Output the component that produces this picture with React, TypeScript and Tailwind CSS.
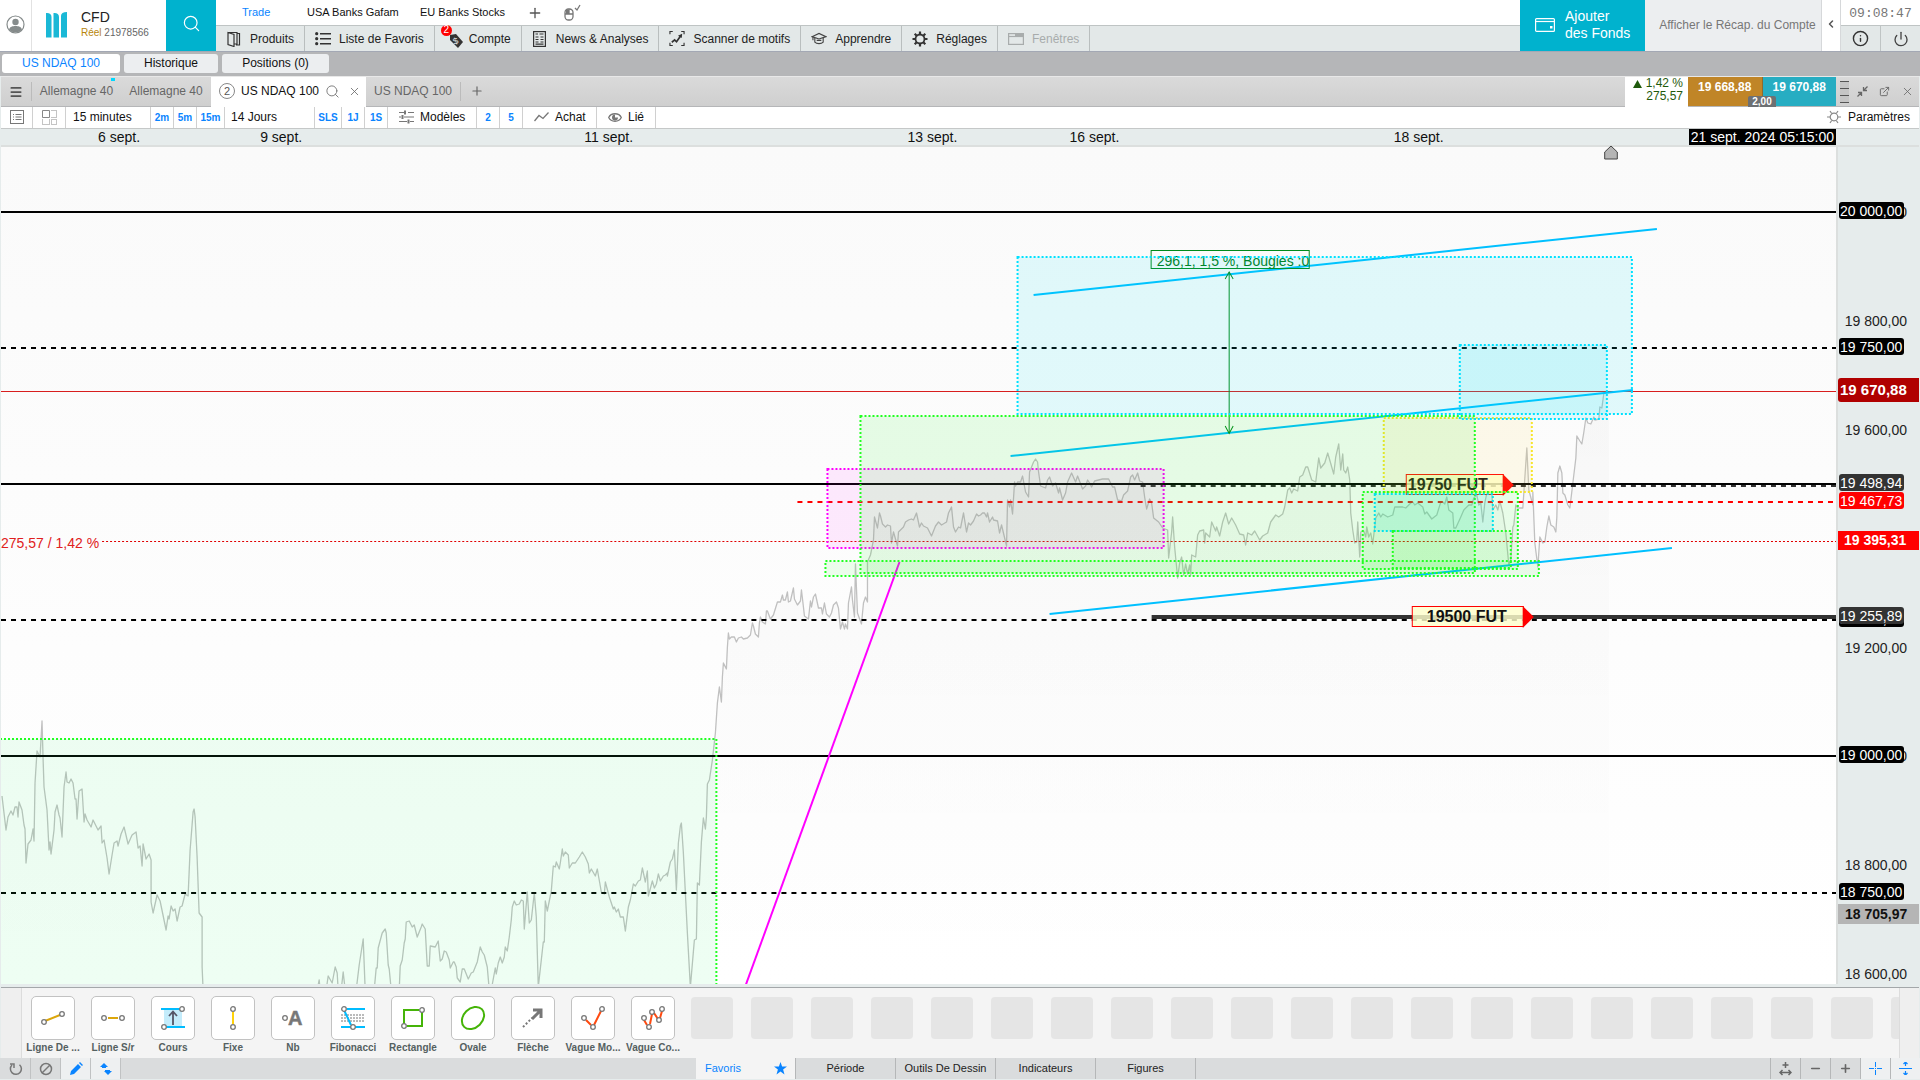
import type { ReactNode } from 'react';
import { Search, X, Plus, Minus, Menu, ExternalLink, ChevronLeft, Power, Info } from 'lucide-react';

// Plot area in screen units, shared by the svg and by the labels around it
const PLOT = { x: 1, y: 147, w: 1834, h: 837 };

const topAt = (y: number) => ({ top: `${((y - PLOT.y) / PLOT.h) * 100}%` });
const leftAt = (x: number) => ({ left: `${((x - PLOT.x) / PLOT.w) * 100}%` });

const PRICES =
  '2,796 6,830 8,817 11,811 13,815 15,807 17,807 18,817 19,802 22,810 24,825 25,829 26,863 28,844 31,840 33,829 34,841 35,783 37,751 40,757 42,721 43,757 44,787 47,810 49,850 50,842 51,854 54,830 55,812 57,805 59,815 60,818 62,837 64,787 66,772 67,782 69,783 71,779 73,783 75,799 76,799 77,819 79,791 82,789 84,822 85,814 87,820 91,827 93,820 98,830 101,826 102,843 104,840 107,858 109,874 112,855 114,843 117,841 118,846 121,834 124,827 128,844 132,835 136,832 138,848 140,846 142,866 143,844 146,859 149,854 151,860 151,902 153,913 157,895 160,901 166,930 168,916 169,919 171,906 173,911 175,909 177,921 180,907 182,906 185,894 188,896 190,850 193,812 194,809 195,817 197,857 199,913 202,917 202,967 203,990 ' +
  '317,990 319,980 320,990 326,990 328,976 332,983 335,967 337,973 338,990 341,990 343,972 345,990 356,990 359,965 363,939 365,990 374,990 376,968 377,968 378,948 382,933 385,929 386,933 388,965 389,969 391,990 399,990 400,966 402,960 404,943 405,939 406,922 409,921 412,927 414,925 417,937 421,927 422,924 425,929 427,966 429,966 430,946 435,947 438,941 440,961 442,959 444,951 446,952 449,960 450,968 453,962 454,962 456,967 457,978 460,982 462,969 464,969 468,979 471,973 473,972 477,962 480,947 482,952 484,955 487,967 489,990 491,990 495,968 496,974 498,963 500,957 502,963 504,957 505,947 507,951 509,937 511,920 512,907 514,901 516,905 519,904 521,900 523,901 524,929 527,892 529,923 531,920 534,893 536,917 538,987 543,942 544,942 545,901 547,911 551,891 553,866 555,867 556,862 559,869 560,863 562,849 563,856 565,852 568,855 569,868 572,863 575,863 579,857 582,852 585,857 588,864 589,873 591,869 595,876 597,869 598,875 601,892 604,894 605,882 609,897 613,909 614,907 616,912 618,909 620,917 623,917 625,931 628,907 630,900 633,884 635,886 638,881 640,880 642,868 645,882 647,871 648,896 652,881 654,888 656,884 658,874 660,881 663,876 665,875 667,873 667,876 670,862 672,859 674,850 676,890 678,843 680,826 681,823 683,853 687,933 690,987 694,940 696,939 697,883 699,885 701,842 703,818 705,829 706,817 707,784 709,780 712,760 715,733 ' +
  '717,703 719,687 721,702 722,677 723,663 726,669 727,647 728,633 729,639 731,637 734,637 736,642 738,638 741,637 743,639 747,638 750,635 752,623 753,626 755,634 758,637 759,623 760,617 762,622 765,624 766,611 767,611 770,619 773,615 777,602 780,602 782,595 783,600 785,600 787,592 788,602 790,601 793,588 794,599 797,605 800,601 801,590 803,607 804,616 808,619 810,601 811,607 813,597 815,594 818,608 821,608 822,614 824,603 826,614 829,617 831,613 833,605 836,602 838,608 840,629 842,622 844,629 845,624 847,629 848,603 851,587 852,600 854,617 855,564 857,613 861,624 863,603 865,597 867,602 867,562 870,555 873,540 874,517 877,528 879,513 880,516 882,524 885,527 887,525 890,526 891,543 893,532 897,546 898,532 903,527 905,522 908,520 911,519 913,520 916,513 919,527 921,523 923,526 927,528 931,536 935,526 938,522 941,525 946,522 948,513 951,507 953,527 955,532 958,527 960,528 963,513 966,532 968,523 970,525 973,521 976,514 978,516 980,515 982,513 984,513 986,517 987,513 989,522 992,517 993,520 997,521 999,533 1001,525 1006,546 1007,500 1009,507 1010,500 1012,514 1014,482 1015,486 1017,482 1020,482 1022,476 1025,492 1028,497 1029,472 1033,462 1035,459 1037,462 1038,472 1040,486 1045,488 1047,480 1049,477 1052,486 1055,483 1058,493 1059,488 1062,500 1065,493 1067,482 1071,473 1075,482 1077,476 1082,489 1085,486 1087,480 1089,483 1091,487 1094,481 1102,479 1108,479 1112,487 1114,487 1117,500 1121,501 1123,495 1127,491 1130,477 1132,475 1134,480 1137,473 1139,481 1142,482 1144,497 1146,509 1149,499 1151,503 1153,518 1158,522 1162,528 1167,530 1168,558 1171,532 1172,517 1174,547 1177,578 1179,563 1181,557 1183,575 1185,564 1187,574 1189,565 1190,575 1191,555 1195,557 1197,535 1199,531 ' +
  '1203,530 1204,543 1205,533 1209,537 1211,522 1215,531 1216,527 1219,536 1222,522 1225,513 1228,524 1231,518 1235,525 1239,534 1243,535 1245,545 1247,533 1251,535 1254,531 1259,540 1262,536 1267,533 1270,522 1275,515 1278,517 1282,514 1284,507 1287,490 1289,488 1291,493 1293,489 1297,491 1299,477 1302,475 1305,467 1307,467 1311,480 1315,482 1318,458 1320,468 1324,463 1327,453 1333,474 1335,457 1338,444 1340,470 1342,454 1343,470 1345,473 1347,467 1349,480 1350,513 1352,530 1354,543 1356,542 1357,522 1359,557 1360,532 1363,531 1365,537 1366,527 1368,537 1370,533 1372,544 1375,518 1378,513 1380,517 1382,514 1387,517 1392,515 1394,507 1402,507 1405,508 1410,503 1412,502 1414,505 1417,503 1422,507 1424,514 1426,512 1431,519 1436,515 1440,502 1442,502 1444,504 1446,497 1448,510 1452,513 1453,528 1455,528 1460,517 1463,510 1468,505 1471,505 1473,498 1476,495 1478,505 1480,503 1482,522 1484,503 1486,493 1491,493 1492,510 1495,505 1497,510 1499,501 1502,513 1505,533 1508,565 1510,560 1512,527 1513,525 1515,505 1517,508 1522,508 1523,493 1526,448 1528,490 1532,505 1532,492 1534,543 1537,567 1539,537 1542,543 1544,542 1546,527 1548,516 1550,525 1553,527 1555,532 1556,517 1557,473 1559,466 1561,473 1562,493 1564,495 1567,505 1569,508 1572,483 1575,458 1576,436 1579,441 1581,444 1583,432 1585,418 1587,423 1590,424 1593,417 1594,420 1598,419 1599,407 1601,408 1603,393 1608,392';

const LEVELS = [
  { x: 1, y: 212, width: 2, color: '#000' },
  { x: 1, y: 348, width: 2, color: '#000', dash: '5 5' },
  { x: 1, y: 391.5, width: 1, color: '#d81e1e' },
  { x: 1140, y: 486, width: 2, color: '#333', dash: '5 5' },
  { x: 1, y: 484, width: 2, color: '#000' },
  { x: 797, y: 502, width: 2, color: '#f00', dash: '5 5' },
  { x: 102, y: 541.5, width: 1, color: '#e00000', dash: '2 2' },
  { x: 1, y: 620, width: 2, color: '#000', dash: '5 5' },
  { x: 1151, y: 617, width: 4, color: '#333' },
  { x: 1, y: 756, width: 2, color: '#000' },
  { x: 1, y: 893, width: 2, color: '#000', dash: '5 5' },
];

const ZONES = [
  { x1: -4, y1: 739, x2: 716, y2: 995, color: '#22ff22', fill: '#22f560', alpha: 0.08 },
  { x1: 827, y1: 469, x2: 1163, y2: 548, color: '#ff00ff', alpha: 0.08 },
  { x1: 1383, y1: 418, x2: 1531, y2: 492, color: '#f7e52c', fill: '#ffdc50', alpha: 0.11 },
  { x1: 860, y1: 416, x2: 1474, y2: 573, color: '#22ff22', fill: '#22f522', alpha: 0.1 },
  { x1: 825, y1: 561, x2: 1538, y2: 576, color: '#22ff22', alpha: 0.08 },
  { x1: 1017, y1: 257, x2: 1631, y2: 414, color: '#00e1ff', fill: '#00e4fa', alpha: 0.105 },
  { x1: 1459, y1: 345, x2: 1606, y2: 419, color: '#00e1ff', fill: '#00e4fa', alpha: 0.105 },
  { x1: 1374, y1: 494, x2: 1492, y2: 531, color: '#00e1ff', fill: '#00e4fa', alpha: 0.12 },
  { x1: 1362, y1: 492, x2: 1517, y2: 569, color: '#22ff22', alpha: 0.09 },
  { x1: 1392, y1: 531, x2: 1510, y2: 568, color: '#22ff22', alpha: 0.09 },
];

const TRENDS = [
  { x1: 1033, y1: 295, x2: 1656, y2: 229 },
  { x1: 1010, y1: 456, x2: 1632, y2: 390 },
  { x1: 1049, y1: 614, x2: 1671, y2: 548 },
];

const DATES = [
  { x: 98, label: '6 sept.' },
  { x: 260, label: '9 sept.' },
  { x: 584, label: '11 sept.' },
  { x: 907, label: '13 sept.' },
  { x: 1069, label: '16 sept.' },
  { x: 1393, label: '18 sept.' },
];

const AXIS = [
  { y: 212, label: '20 000,00' },
  { y: 321, label: '19 800,00' },
  { y: 430, label: '19 600,00' },
  { y: 648, label: '19 200,00' },
  { y: 756, label: '19 000,00' },
  { y: 865, label: '18 800,00' },
  { y: 974, label: '18 600,00' },
];

const TAGS = [
  { y: 202, label: '20 000,00', tone: 'bg-black' },
  { y: 338, label: '19 750,00', tone: 'bg-black' },
  { y: 474, label: '19 498,94', tone: 'bg-[#333]' },
  { y: 492, label: '19 467,73', tone: 'bg-[#f00]' },
  { y: 610, label: '19 250,00', tone: 'bg-black' },
  { y: 607, label: '19 255,89', tone: 'bg-[#333]' },
  { y: 746, label: '19 000,00', tone: 'bg-black' },
  { y: 883, label: '18 750,00', tone: 'bg-black' },
];

/* ---------- Icons ---------- */

function UserIcon() {
  return (
    <svg width="19" height="19" viewBox="0 0 19 19" fill="none">
      <circle cx="9.5" cy="9.5" r="8.5" stroke="#858b8b" strokeWidth="1.2" />
      <circle cx="9.5" cy="7" r="3.2" fill="#858b8b" />
      <path d="M3 14.5c1-3 3.500-3.500 6.500-3.500s5.500.5 6.500 3.500c-1.600 2-4 3-6.500 3s-4.900-1-6.500-3z" fill="#858b8b" />
    </svg>
  );
}

function Logo() {
  return (
    <svg width="21" height="26" viewBox="0 0 21 26" fill="#1ab8d6">
      <path d="M0 1c3-.5 5.500 1 5.500 4v20.500H0z" />
      <path d="M7.500 1c3-.5 5.500 1 5.500 4v20.500H7.500z" />
      <path d="M15 4c0-2.500 2-4 6-4v25.500h-6z" />
    </svg>
  );
}

function MouseIcon() {
  return (
    <svg width="18" height="18" viewBox="0 0 18 18" fill="none" stroke="#777" strokeWidth="1.3">
      <rect x="2" y="5" width="8" height="11" rx="3.500" />
      <path d="M2 10h8M6 5v5" />
      <path d="M3 6h3v4H3z" fill="#777" stroke="none" />
      <path d="M12 4l2 2 3-5" />
    </svg>
  );
}

function BookIcon() {
  return (
    <svg width="14" height="16" viewBox="0 0 14 16" fill="none" stroke="#333" strokeWidth="1.2">
      <path d="M1 1.500l6 2v12l-6-2z" />
      <path d="M1 1.500h9v11.500H7M10 2.500h2.500v11.500H9" />
    </svg>
  );
}

function ListIcon() {
  return (
    <svg width="16" height="14" viewBox="0 0 16 14" fill="#333">
      <path d="M5 1h11v1.500H5zM5 6h11v1.500H5zM5 11h11v1.500H5z" />
      <circle cx="1.700" cy="1.700" r="1.600" />
      <circle cx="1.700" cy="6.700" r="1.600" />
      <circle cx="1.700" cy="11.700" r="1.600" />
    </svg>
  );
}

function AccountIcon() {
  return (
    <span className="relative block h-5 w-4">
      <svg width="20" height="20" viewBox="0 0 20 20" fill="#333">
        <path d="M5 6l6-1 7 8-5 6-8-8z" />
        <text x="8" y="15" fontSize="9" fill="#e3e8e8" transform="rotate(-20 11 12)">$</text>
      </svg>
      <span className="absolute -top-1 -left-1 flex size-[11px] items-center justify-center rounded-full bg-[#f00] text-[10px] text-white">2</span>
    </span>
  );
}

function NewsIcon() {
  return (
    <svg width="13" height="16" viewBox="0 0 13 16" fill="none" stroke="#333" strokeWidth="1.200">
      <rect x=".6" y=".6" width="11.800" height="14.800" />
      <path d="M2.500 3h2.500M6.500 3h4M2.500 6h3M2.500 8.500h3M2.500 11h3M7.500 6h3M7.500 8.500h3M7.500 11h3M2.500 13.200h8" />
    </svg>
  );
}

function ScannerIcon() {
  return (
    <svg width="16" height="17" viewBox="0 0 17 17" fill="none" stroke="#333" strokeWidth="1.200">
      <path d="M1 4V1h3M13 1h3v3M1 13v3h3M13 16h3v-3" />
      <path d="M3 12.500l3-2.500 2 2 4.500-6.500" strokeWidth="1.800" />
      <path d="M9.500 5.500L14 3.500l-.5 4.500z" fill="#333" stroke="none" />
    </svg>
  );
}

function LearnIcon() {
  return (
    <svg width="16" height="13" viewBox="0 0 17 14" fill="none" stroke="#444" strokeWidth="1.200">
      <path d="M1 5l7.500-3.500L16 5l-7.500 2.500z" />
      <path d="M4 6.500v4.500c2 2 7 2 9 0V6.500M6 9h5M2 5.500V9" />
    </svg>
  );
}

function GearIcon() {
  return (
    <svg width="16" height="16" viewBox="0 0 16 16" fill="none" stroke="#333">
      <circle cx="8" cy="8" r="4.500" strokeWidth="1.800" />
      <path d="M8 .5v3M8 12.500v3M.5 8h3M12.500 8h3M2.700 2.700l2 2M11.300 11.300l2 2M2.700 13.300l2-2M11.300 4.700l2-2" strokeWidth="2.200" />
    </svg>
  );
}

function WindowIcon() {
  return (
    <svg width="16" height="12" viewBox="0 0 16 12" fill="none" stroke="#a8acac" strokeWidth="1.200">
      <rect x=".6" y=".6" width="14.800" height="10.800" />
      <path d="M1 3.500h14" />
      <path d="M7 1h8v2.500H7z" fill="#a8acac" stroke="none" />
    </svg>
  );
}

function WalletIcon() {
  return (
    <svg width="20" height="14" viewBox="0 0 20 14" fill="none" stroke="#fff" strokeWidth="1.200">
      <rect x=".6" y=".6" width="18.800" height="12.800" rx="1" />
      <path d="M1 3.500h18" />
      <path d="M15 8h2.500v2.500H15z" fill="#fff" stroke="none" />
    </svg>
  );
}

function OutlineListIcon() {
  return (
    <svg width="14" height="14" viewBox="0 0 14 14" fill="none" stroke="#777">
      <rect x=".5" y=".5" width="13" height="13" />
      <path d="M3 4.500h1M3 7h1M3 9.500h1M5.500 4.500h6M5.500 7h6M5.500 9.500h6" />
    </svg>
  );
}

function GridIcon() {
  return (
    <svg width="15" height="15" viewBox="0 0 15 15" fill="none" stroke="#888">
      <path d="M.5.5h7v7h-7z" />
      <path d="M9.500.5h5v7h-5M.5 9.500v5h7v-5M9.500 9.500h5v5h-5z" strokeDasharray="1 1" />
    </svg>
  );
}

function SlidersIcon() {
  return (
    <svg width="15" height="14" viewBox="0 0 15 14" fill="none" stroke="#777" strokeWidth="1.200">
      <path d="M0 2.500h6M9 2.500h6M0 7h2M5 7h10M0 11.500h8M11 11.500h4" />
      <path d="M6 .5v4M3.500 5v4M9.500 9.500v4" strokeWidth="2" />
    </svg>
  );
}

function LineIcon() {
  return (
    <svg width="15" height="10" viewBox="0 0 15 10" fill="none" stroke="#777" strokeWidth="1.300">
      <path d="M.5 9L5 3.500 9 6.500 14.500.5" />
    </svg>
  );
}

function EyeIcon() {
  return (
    <svg width="14" height="11" viewBox="0 0 14 11" fill="none" stroke="#777">
      <path d="M.7 5.500C3 .5 11 .5 13.300 5.500 11 10.500 3 10.500.7 5.500z" strokeWidth="1.300" />
      <path d="M7 2.500a3 3 0 1 0 3 3H7z" fill="#777" stroke="none" />
    </svg>
  );
}

function SunIcon() {
  return (
    <svg width="14" height="14" viewBox="0 0 14 14" fill="none" stroke="#888" strokeWidth="1.200">
      <circle cx="7" cy="7" r="3.800" />
      <path d="M0 7h3M11 7h3M3 1l1.700 2.500M11 1L9.300 3.500M3 13l1.700-2.500M11 13l-1.700-2.500" />
    </svg>
  );
}

function CollapseIcon() {
  return (
    <svg width="11" height="11" viewBox="0 0 11 11" fill="none" stroke="#666" strokeWidth="1.300">
      <path d="M10.500.5L7 4M6.500 1v3.500H10M.5 10.500L4 7M1 6.500h3.500V10" />
    </svg>
  );
}

/* ---------- Drawing tools ---------- */

const node = { r: 2.3, fill: '#fff', stroke: '#777', strokeWidth: 1.3 };

const TOOLS: { label: string; icon: ReactNode }[] = [
  {
    label: 'Ligne De ...',
    icon: (
      <>
        <path d="M6 18L21 12" stroke="#dca60a" strokeWidth="2" />
        <circle cx="5" cy="19" {...node} />
        <circle cx="23" cy="11" {...node} />
      </>
    ),
  },
  {
    label: 'Ligne S/r',
    icon: (
      <>
        <path d="M9 15h10" stroke="#dca60a" strokeWidth="2" />
        <circle cx="5" cy="15" {...node} />
        <circle cx="23" cy="15" {...node} />
      </>
    ),
  },
  {
    label: 'Cours',
    icon: (
      <>
        <path d="M5 7h18v16H5z" fill="#c4ecfb" />
        <path d="M2 6h20M5 24h21" stroke="#00bcff" strokeWidth="2" />
        <path d="M14 22V9M10 13l4-4.500 4 4.500" stroke="#556" strokeWidth="1.800" />
        <circle cx="23" cy="6" {...node} />
        <circle cx="5" cy="24" {...node} />
      </>
    ),
  },
  {
    label: 'Fixe',
    icon: (
      <>
        <path d="M14 9v12" stroke="#ffd20a" strokeWidth="2" />
        <circle cx="14" cy="6" {...node} />
        <circle cx="14" cy="24" {...node} />
      </>
    ),
  },
  {
    label: 'Nb',
    icon: (
      <>
        <circle cx="6" cy="15" {...node} />
        <text x="9" y="22" fontSize="20" fill="#777" stroke="#777" strokeWidth=".5" fontFamily="Liberation Sans, sans-serif">A</text>
      </>
    ),
  },
  {
    label: 'Fibonacci',
    icon: (
      <>
        <path d="M8 6h18M2 24h24" stroke="#00bcff" strokeWidth="2" />
        <path d="M2 12h24M2 15h24M2 18h24" stroke="#777" strokeDasharray="2 1" />
        <path d="M5 7l7 15" stroke="#00bcff" strokeWidth="2" />
        <circle cx="5" cy="6" {...node} />
        <circle cx="14" cy="24" {...node} />
      </>
    ),
  },
  {
    label: 'Rectangle',
    icon: (
      <>
        <path d="M5 21V7h15M23 9v14H8" stroke="#45b408" strokeWidth="2" />
        <circle cx="23" cy="7" {...node} />
        <circle cx="5" cy="23" {...node} />
      </>
    ),
  },
  {
    label: 'Ovale',
    icon: <ellipse cx="14" cy="15" rx="12.500" ry="9.500" transform="rotate(-45 14 15)" stroke="#45b408" strokeWidth="2" />,
  },
  {
    label: 'Flèche',
    icon: (
      <>
        <path d="M4 24l9-9" stroke="#777" strokeWidth="2" strokeDasharray="2 2" />
        <path d="M13 16l9-9M14 7h8v8" stroke="#777" strokeWidth="3" />
      </>
    ),
  },
  {
    label: 'Vague Mo...',
    icon: (
      <>
        <path d="M7 17l5 5M15 22l7-14" stroke="#ff4a10" strokeWidth="2" />
        <circle cx="5" cy="15" {...node} />
        <circle cx="14" cy="24" {...node} />
        <circle cx="23" cy="6" {...node} />
      </>
    ),
  },
  {
    label: 'Vague Co...',
    icon: (
      <>
        <path d="M5 17l3 5M11 21l2-10M15 10l4 6M21 15l2-7" stroke="#ff4a10" strokeWidth="2" />
        <circle cx="5" cy="15" {...node} />
        <circle cx="10" cy="24" {...node} />
        <circle cx="13" cy="9" {...node} />
        <circle cx="20" cy="17" {...node} />
        <circle cx="23" cy="6" {...node} />
      </>
    ),
  },
];

/* ---------- Header ---------- */

function NavItem({ icon, label, disabled }: { icon: ReactNode; label: string; disabled?: boolean }) {
  return (
    <button
      disabled={disabled}
      className="flex items-center gap-2 border-r border-[#b9bebe] px-2.5 text-xs text-[#222] disabled:text-[#a8acac]"
    >
      <span className="flex min-w-4 justify-center">{icon}</span>
      {label}
    </button>
  );
}

function Header() {
  return (
    <header className="flex h-[52px] shrink-0 border-b border-[#a3a8b4] bg-white">
      <button aria-label="Profil" className="flex w-8 items-center justify-center border-r border-[#e2e2e2] pb-[3px]">
        <UserIcon />
      </button>
      <div className="flex w-[134px] items-center gap-[14px] pb-px pl-[14px]">
        <Logo />
        <div>
          <div className="text-sm leading-4 text-[#222]">CFD</div>
          <div className="text-[10px] leading-4 text-[#666]">
            <span className="text-[#b8860b]">Réel</span> 21978566
          </div>
        </div>
      </div>
      <button aria-label="Rechercher" className="flex w-[50px] items-center justify-center bg-[#00b2ce] pb-1">
        <Search size={19} strokeWidth={1.5} className="text-white" />
      </button>
      <div className="flex flex-1 flex-col">
        <div className="flex h-[25px] items-center pl-[26px] text-[11px] text-[#111]">
          <button className="w-[65px] text-left text-[#0a84ff]">Trade</button>
          <button className="w-[113px] text-left">USA Banks Gafam</button>
          <button className="w-[107px] text-left">EU Banks Stocks</button>
          <button aria-label="Ajouter"><Plus size={16} strokeWidth={2} className="text-[#555]" /></button>
          <button aria-label="Un clic" className="ml-5"><MouseIcon /></button>
        </div>
        <nav className="flex flex-1 border-t border-[#bfc4c4] bg-[#e3e8e8]">
          <NavItem icon={<BookIcon />} label="Produits" />
          <NavItem icon={<ListIcon />} label="Liste de Favoris" />
          <NavItem icon={<AccountIcon />} label="Compte" />
          <NavItem icon={<NewsIcon />} label="News & Analyses" />
          <NavItem icon={<ScannerIcon />} label="Scanner de motifs" />
          <NavItem icon={<LearnIcon />} label="Apprendre" />
          <NavItem icon={<GearIcon />} label="Réglages" />
          <NavItem icon={<WindowIcon />} label="Fenêtres" disabled />
        </nav>
      </div>
      <button className="flex w-[125px] items-center gap-[10px] bg-[#00b2ce] pb-[2px] pl-[15px] text-left text-sm leading-[17px] text-white">
        <WalletIcon />
        <span>Ajouter<br />des Fonds</span>
      </button>
      <button className="w-[177px] border-r border-[#d6d8da] bg-[#eceef0] pb-[2px] pl-[9px] text-center text-xs text-[#777]">
        Afficher le Récap. du Compte
      </button>
      <button aria-label="Replier" className="flex w-[18px] items-center justify-center pb-1">
        <ChevronLeft size={12} strokeWidth={3} className="text-[#555]" />
      </button>
      <div className="flex w-20 flex-col border-l border-[#d6d8da]">
        <div className="flex h-[25px] items-center justify-center pt-[2px] font-['Liberation_Mono',monospace] text-[13px] text-[#777]">09:08:47</div>
        <div className="flex flex-1 border-t border-[#bfc4c4] bg-[#e3e8e8]">
          <button aria-label="Infos" className="flex flex-1 items-center justify-center border-r border-[#bfc4c4]">
            <Info size={17} strokeWidth={2} className="text-[#333]" />
          </button>
          <button aria-label="Quitter" className="flex flex-1 items-center justify-center">
            <Power size={16} strokeWidth={2} className="text-[#444]" />
          </button>
        </div>
      </div>
    </header>
  );
}

function WorkspaceTabs() {
  return (
    <div className="flex h-6 shrink-0 gap-1 bg-[#b5b6b8] pt-[2px] pb-[3px] pl-[2px] text-xs text-[#111]">
      <button className="w-[118px] rounded-[3px] bg-white pb-[2px] text-[#0a84ff]">US NDAQ 100</button>
      <button className="w-[94px] rounded-[3px] bg-[#eceef0] pb-[2px]">Historique</button>
      <button className="w-[107px] rounded-[3px] bg-[#eceef0] pb-[2px]">Positions (0)</button>
    </div>
  );
}

function ChartTabs() {
  return (
    <div className="flex h-[31px] shrink-0 border-t border-b border-t-[#e8e8e8] border-b-[#b5b6b8] bg-linear-to-b from-[#dadada] to-[#cfcfcf] text-xs text-[#666]">
      <button aria-label="Menu" className="my-[5px] flex w-[31px] items-center justify-center border-r border-[#bbb]">
        <Menu size={14} strokeWidth={3} className="text-[#555]" />
      </button>
      <button className="relative w-[89px] pb-[2px]">
        Allemagne 40
        <span className="absolute top-px right-[6px] h-[3px] w-1 bg-[#00d8ff]" />
      </button>
      <button className="w-[90px] pb-[2px]">Allemagne 40</button>
      <div className="-mb-px flex w-[155px] items-center bg-white pb-[2px] pl-2 text-[#111]">
        <span className="flex size-4 items-center justify-center rounded-full border border-[#888] text-[11px] text-[#555]">2</span>
        <button className="ml-[6px]">US NDAQ 100</button>
        <Search size={15} strokeWidth={1.5} className="ml-[6px] text-[#777]" />
        <button aria-label="Fermer" className="ml-2"><X size={13} strokeWidth={1.5} className="text-[#666]" /></button>
      </div>
      <button className="w-[94px] pb-[2px]">US NDAQ 100</button>
      <button aria-label="Nouvel onglet" className="my-[5px] flex w-8 items-center justify-center border-l border-[#bbb] pb-px">
        <Plus size={14} strokeWidth={2} />
      </button>
      <div className="ml-auto -mb-px w-[63px] bg-white pr-[5px] text-right leading-[13px] text-[#1f5a0c]">
        <div className="flex items-center justify-end gap-1">
          <svg width="9" height="8" viewBox="0 0 9 8" fill="#1f5a0c"><path d="M4.500 0L9 8H0z" /></svg>
          1,42 %
        </div>
        275,57
      </div>
      <div className="relative flex w-[148px] font-bold text-white">
        <button className="flex-1 border-r border-[#8f6a2c] bg-[#c08527] pb-[10px]">19 668,88</button>
        <button className="flex-1 bg-[#27adc2] pb-[10px]">19 670,88</button>
        <span className="absolute -bottom-px left-[60px] flex h-[11px] w-7 items-center justify-center rounded-t-[2px] bg-[#6d7073] text-[10px]">2,00</span>
      </div>
      <div className="flex w-[83px] items-center pl-1">
        <div className="flex w-[9px] flex-col gap-[6px] bg-[#c5c5c5]">
          <i className="h-px bg-[#555]" />
          <i className="h-px bg-[#555]" />
          <i className="h-px bg-[#555]" />
          <i className="h-px bg-[#555]" />
        </div>
        <div className="flex flex-1 items-center justify-between pr-[5px] pl-[8px]">
          <button aria-label="Réduire"><CollapseIcon /></button>
          <button aria-label="Détacher"><ExternalLink size={11} strokeWidth={2} /></button>
          <button aria-label="Fermer la fenêtre"><X size={13} strokeWidth={1.5} /></button>
        </div>
      </div>
    </div>
  );
}

function Toolbar() {
  const cell = 'flex items-center border-r border-[#d0d0d0] pb-px';
  const quick = 'flex items-center justify-center border-r border-[#d0d0d0] text-[10px] font-bold text-[#0a84ff]';
  return (
    <div className="flex h-[22px] shrink-0 border-b border-[#c5c8c8] bg-white text-xs text-[#111]">
      <button aria-label="Liste" className={`${cell} w-8 justify-center`}><OutlineListIcon /></button>
      <button aria-label="Disposition" className={`${cell} w-[33px] justify-center`}><GridIcon /></button>
      <button className={`${cell} w-[85px] pl-[7px]`}>15 minutes</button>
      <button className={`${quick} w-[23px]`}>2m</button>
      <button className={`${quick} w-[23px]`}>5m</button>
      <button className={`${quick} w-[28px]`}>15m</button>
      <button className={`${cell} w-[90px] pl-[6px]`}>14 Jours</button>
      <button className={`${quick} w-[27px]`}>SLS</button>
      <button className={`${quick} w-[23px]`}>1J</button>
      <button className={`${quick} w-[23px]`}>1S</button>
      <button className={`${cell} w-[89px] gap-[6px] pl-[11px]`}><SlidersIcon />Modèles</button>
      <button className={`${quick} w-[23px]`}>2</button>
      <button className={`${quick} w-[23px]`}>5</button>
      <button className={`${cell} w-[74px] gap-[6px] pl-[11px]`}><LineIcon />Achat</button>
      <button className={`${cell} w-[59px] gap-[6px] pl-[11px]`}><EyeIcon />Lié</button>
      <button className="ml-auto flex items-center gap-[7px] pr-[9px] pb-px"><SunIcon />Paramètres</button>
    </div>
  );
}

/* ---------- Chart ---------- */

function DateAxis() {
  return (
    <div className="flex h-[18px] shrink-0 border-b-2 border-[#dcdfde] bg-[#e6ecec] text-sm leading-4 text-[#111]">
      <div className="relative flex-1">
        {DATES.map((d) => (
          <span key={d.label} className="absolute top-0 whitespace-nowrap" style={leftAt(d.x)}>{d.label}</span>
        ))}
        <span className="absolute top-0 right-0 bg-black px-[2px] whitespace-nowrap text-white">21 sept. 2024 05:15:00</span>
      </div>
      <div className="w-[83px]" />
    </div>
  );
}

function FutLabel({ x, y, width, textX, text }: { x: number; y: number; width: number; textX: number; text: string }) {
  const end = x + width;
  return (
    <g>
      <rect x={x + 0.5} y={y + 0.5} width={width} height="20" fill="#ffffcc" fillOpacity=".82" stroke="#f00" />
      <path d={`M${end} ${y}L${end + 11} ${y + 11}L${end} ${y + 22}z`} fill="#f00" />
      <text x={textX} y={y + 16} fontSize="16" fontWeight="bold" fill="#111">{text}</text>
    </g>
  );
}

function Plot() {
  return (
    <svg
      viewBox={`${PLOT.x} ${PLOT.y} ${PLOT.w} ${PLOT.h}`}
      preserveAspectRatio="none"
      className="absolute inset-0 h-full w-full"
      fontFamily="Liberation Sans, Arial, sans-serif"
    >
      <defs>
        <linearGradient id="sky" x1="0" y1="0" x2="0" y2="1">
          <stop offset="0" stopColor="#fafafa" />
          <stop offset="1" stopColor="#ffffff" />
        </linearGradient>
        <linearGradient id="area" x1="0" y1="0" x2="0" y2="1">
          <stop offset="0" stopColor="#000" stopOpacity=".02" />
          <stop offset="1" stopColor="#000" stopOpacity="0" />
        </linearGradient>
      </defs>
      <rect x="1" y="147" width="1834" height="837" fill="url(#sky)" />
      <polygon points={`2,990 ${PRICES} 1608,990`} fill="url(#area)" />
      <polyline points={PRICES} fill="none" stroke="#c0c0c0" strokeWidth="1.300" strokeLinejoin="round" />

      {LEVELS.map((l) => (
        <line key={l.y} x1={l.x} x2="1835" y1={l.y} y2={l.y} stroke={l.color} strokeWidth={l.width} strokeDasharray={l.dash} />
      ))}

      <FutLabel x={1405} y={474} width={97} textX={1407} text="19750 FUT" />
      <FutLabel x={1411} y={606} width={111} textX={1426} text="19500 FUT" />

      {TRENDS.map((t) => (
        <line key={t.x1} {...t} stroke="#00c0ff" strokeWidth="2" />
      ))}
      <line x1="899" y1="562" x2="745" y2="986" stroke="#ff00ff" strokeWidth="2" />

      {/* Measure */}
      <g stroke="#008a1a" fill="none">
        <rect x="1150.5" y="250.5" width="158" height="18" />
        <path d="M1228.500 272V433" />
        <path d="M1224.500 279l4-7 4 7M1224.500 426l4 7.500 4-7.500" />
      </g>
      <text x="1156" y="266" fontSize="14" fill="#007a14">296,1, 1,5 %, Bougies :0</text>

      {ZONES.map((z) => (
        <g key={`${z.x1}-${z.y1}`}>
          <rect x={z.x1} y={z.y1} width={z.x2 - z.x1} height={z.y2 - z.y1} fill={z.fill ?? z.color} fillOpacity={z.alpha} />
          <rect x={z.x1} y={z.y1} width={z.x2 - z.x1} height={z.y2 - z.y1} fill="none" stroke={z.color} strokeWidth="2" strokeDasharray="2 2" />
        </g>
      ))}
    </svg>
  );
}

function PriceAxis() {
  return (
    <div className="relative w-[83px] overflow-hidden border-l-2 border-[#dcdfde] bg-[#e6ecec] text-sm leading-[17px]">
      {AXIS.map((a) => (
        <span key={a.label} className="absolute right-3 -translate-y-1/2 whitespace-nowrap text-[#222]" style={topAt(a.y)}>{a.label}</span>
      ))}
      {TAGS.map((t) => (
        <span key={t.label} className={`absolute left-px h-[17px] w-[65px] rounded-[3px] pl-px leading-[19px] whitespace-nowrap text-white ${t.tone}`} style={topAt(t.y)}>{t.label}</span>
      ))}
      <span className="absolute inset-x-0 rounded-l-[3px] bg-[#b00000] pl-[2px] text-[15px] leading-6 font-bold text-white" style={topAt(378)}>19 670,88</span>
      <span className="absolute inset-x-0 bg-[#f00] pl-[6px] leading-[19px] font-bold text-white" style={topAt(531)}>19 395,31</span>
      <span className="absolute inset-x-0 bg-[#b5b5b5] pl-[7px] leading-5 font-bold text-[#111]" style={topAt(904)}>18 705,97</span>
    </div>
  );
}

function Chart() {
  return (
    <main className="flex min-h-0 flex-1">
      <div className="relative flex-1">
        <Plot />
        <svg width="14" height="15" viewBox="0 0 14 15" className="absolute -top-[2px]" style={leftAt(1603)}>
          <path d="M7 1l6.300 6v7H.7V7z" fill="#b5b5b5" stroke="#444" />
        </svg>
        <span className="absolute left-0 -translate-y-1/2 text-sm text-[#e02020]" style={topAt(543)}>275,57 / 1,42 %</span>
      </div>
      <PriceAxis />
    </main>
  );
}

/* ---------- Footer ---------- */

function ToolTray() {
  return (
    <div className="mt-[3px] flex h-[71px] shrink-0 border-t border-[#a3a7a9] bg-[#f4f4f4]">
      <div className="w-[21px] border-r border-[#dcdcdc] bg-[#efefef]" />
      <div className="flex flex-1 overflow-hidden pl-px">
        {TOOLS.map((tool) => (
          <button key={tool.label} className="flex w-[60px] shrink-0 flex-col items-center pt-2 text-[10px] leading-4 font-bold whitespace-nowrap text-[#546060]">
            <span className="flex size-11 items-center justify-center rounded-[5px] border border-[#c2c2c2] bg-white">
              <svg width="28" height="30" viewBox="0 0 28 30" fill="none">{tool.icon}</svg>
            </span>
            {tool.label}
          </button>
        ))}
        {Array.from({ length: 21 }, (_, i) => (
          <div key={i} className="flex w-[60px] shrink-0 pt-[9px] pl-2">
            <div className="size-[42px] rounded-[4px] bg-[#e5e5e5]" />
          </div>
        ))}
      </div>
      <div className="w-5 border-l border-[#dcdcdc] bg-[#efefef]" />
    </div>
  );
}

function StatusBar() {
  const left = 'flex w-[30px] items-center justify-center border-r border-[#c0c2c3]';
  const right = 'flex w-[30px] items-center justify-center border-l border-[#b5b7b8]';
  const tab = 'w-[100px] border-r border-[#b5b7b8]';
  return (
    <footer className="mb-px flex h-[21px] shrink-0 bg-[#dadcdd] pl-px text-[11px] text-[#222]">
      <button aria-label="Réinitialiser" className={left}>
        <svg width="14" height="14" viewBox="0 0 14 14" fill="none" stroke="#777" strokeWidth="1.500">
          <path d="M3 3a5.500 5.500 0 1 0 7.500-.3M1 2h4v4" />
        </svg>
      </button>
      <button aria-label="Effacer" className={left}>
        <svg width="14" height="14" viewBox="0 0 14 14" fill="none" stroke="#777" strokeWidth="1.500">
          <circle cx="7" cy="7" r="5.500" />
          <path d="M3 11l8-8" />
        </svg>
      </button>
      <button aria-label="Dessiner" className={`${left} bg-[#eef0f1]`}>
        <svg width="14" height="14" viewBox="0 0 14 14" fill="#0a84ff">
          <path d="M1 13l1-4 7-7 3 3-7 7zM10 1l1-1 3 3-1 1z" />
        </svg>
      </button>
      <button aria-label="Déplacer" className={`${left} bg-[#eef0f1]`}>
        <svg width="12" height="12" viewBox="0 0 12 12" fill="#0a84ff">
          <path d="M4 0l4 4H6v1H2V4H0zM8 12l-4-4h1V7h5v1h2z" />
        </svg>
      </button>
      <div className="ml-[575px] flex">
        <button className={`${tab} flex items-center justify-between bg-[#f4f4f4] pr-2 pl-[9px] text-[#0a84ff]`}>
          Favoris
          <svg width="13" height="13" viewBox="0 0 13 13" fill="#0a84ff">
            <path d="M6.500 0l1.600 4.600H13L9.100 7.600l1.400 4.900-4-3-4 3 1.400-4.900L0 4.600h4.900z" />
          </svg>
        </button>
        <button className={tab}>Période</button>
        <button className={tab}>Outils De Dessin</button>
        <button className={tab}>Indicateurs</button>
        <button className={tab}>Figures</button>
      </div>
      <div className="ml-auto flex">
        <button aria-label="Ajuster" className={right}>
          <svg width="13" height="14" viewBox="0 0 13 14" fill="none" stroke="#666" strokeWidth="1.500">
            <path d="M6.500 0v6M3.500 3h6M1 10.500h11M3.500 8L1 10.500 3.500 13M9.500 8l2.500 2.500L9.500 13" />
          </svg>
        </button>
        <button aria-label="Zoom arrière" className={right}><Minus size={13} strokeWidth={3} className="text-[#666]" /></button>
        <button aria-label="Zoom avant" className={right}><Plus size={13} strokeWidth={3} className="text-[#666]" /></button>
        <button aria-label="Réticule" className={`${right} bg-[#eef0f1]`}>
          <svg width="13" height="13" viewBox="0 0 13 13" fill="none" stroke="#0a84ff">
            <path d="M6.500 0v5M6.500 8v5M0 6.500h5M8 6.500h5M6 6.500h1" />
          </svg>
        </button>
        <button aria-label="Échelle" className={`${right} bg-[#eef0f1]`}>
          <svg width="13" height="13" viewBox="0 0 13 13" fill="none" stroke="#0a84ff" strokeWidth="1.200">
            <path d="M0 6.500h13M6.500 0v4M4.500 2l2-2 2 2M6.500 9v4M4.500 11l2 2 2-2" />
          </svg>
        </button>
      </div>
    </footer>
  );
}

export default function App() {
  return (
    <div className="flex h-screen flex-col overflow-hidden bg-[#e6ecec] font-['Liberation_Sans',Arial,sans-serif]">
      <Header />
      <WorkspaceTabs />
      <div className="flex min-h-0 flex-1 flex-col px-px">
        <ChartTabs />
        <Toolbar />
        <DateAxis />
        <Chart />
        <ToolTray />
      </div>
      <StatusBar />
    </div>
  );
}
